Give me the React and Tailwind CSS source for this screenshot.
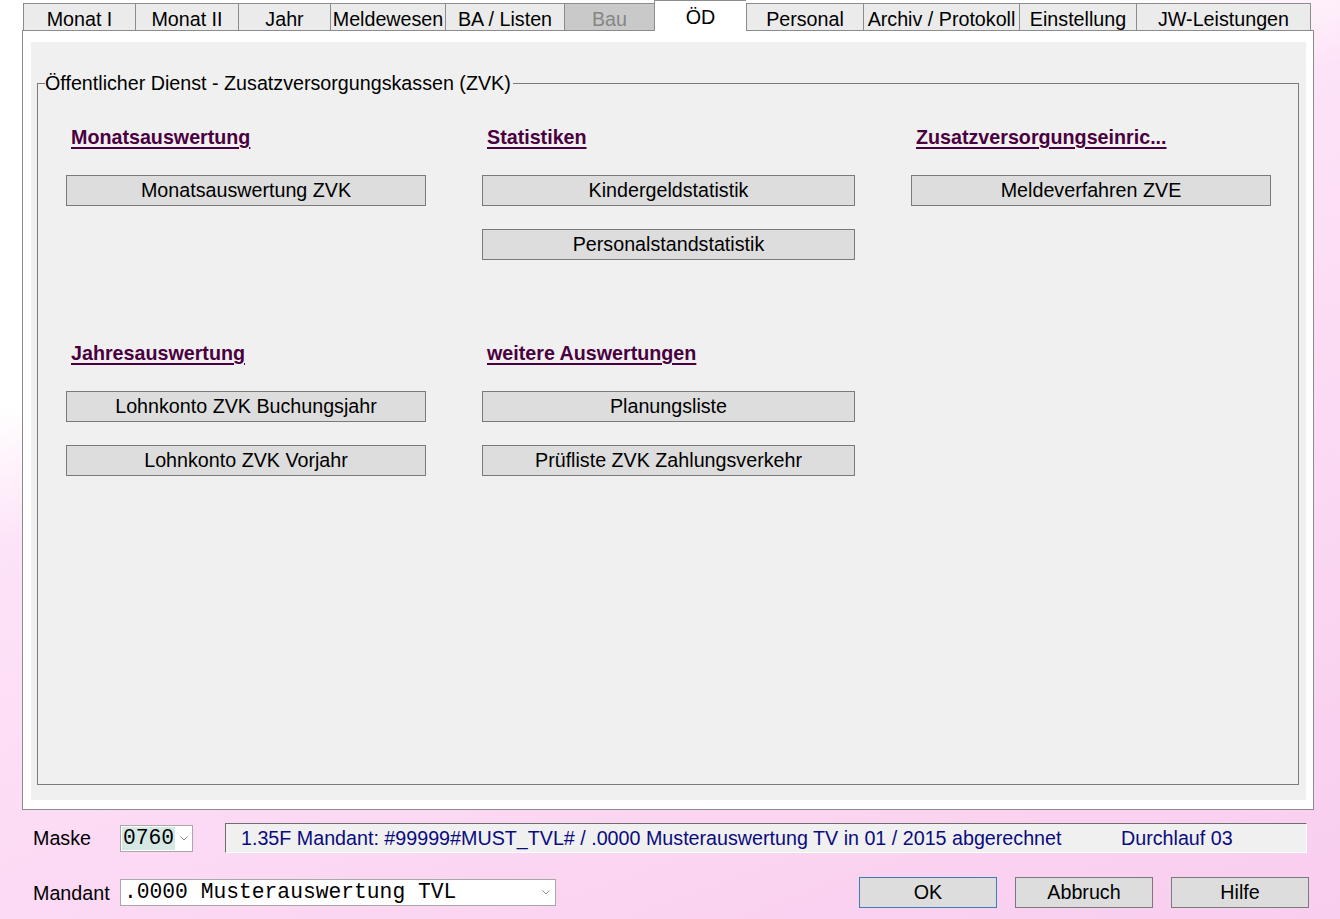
import React from "react";

const tabs = [
  { label: "Monat I", w: "w-[112px]" },
  { label: "Monat II", w: "w-[103px]" },
  { label: "Jahr", w: "w-[92px]" },
  { label: "Meldewesen", w: "w-[115px]" },
  { label: "BA / Listen", w: "w-[119px]" },
  { label: "Bau", w: "w-[90px]", disabled: true },
  { label: "ÖD", w: "w-[92px]", active: true },
  { label: "Personal", w: "w-[117px]" },
  { label: "Archiv / Protokoll", w: "w-[156px]" },
  { label: "Einstellung", w: "w-[117px]" },
  { label: "JW-Leistungen", w: "w-[175px]", last: true },
];

function Tab({ label, w, disabled, active, last }) {
  if (active) {
    return (
      <div
        className={`${w} h-[31px] -mb-px shrink-0 border-l border-t border-[#8c8c8c] bg-white pt-[5px] text-center leading-[22px] whitespace-nowrap`}
      >
        {label}
      </div>
    );
  }
  return (
    <div
      className={`${w} h-[27px] shrink-0 border-l border-t ${
        last ? "border-r" : ""
      } border-[#8c8c8c] pt-[4px] text-center leading-[22px] whitespace-nowrap ${
        disabled ? "bg-[#c9c9c9] text-[#858585]" : "bg-[#ebebeb]"
      }`}
    >
      {label}
    </div>
  );
}

function ActionButton({ children }) {
  return (
    <button className="h-[31px] w-full border border-[#7a7a7a] bg-[#dddddd] text-center leading-[29px] text-black whitespace-nowrap">
      {children}
    </button>
  );
}

function Section({ title, items }) {
  return (
    <div className="flex flex-col">
      <div className="h-[24px] pl-[5px] font-bold leading-[24px] text-[#4a0040] underline decoration-[2px] underline-offset-[3px] whitespace-nowrap">
        {title}
      </div>
      <div className="mt-[26px] flex flex-col gap-[23px]">
        {items.map((t) => (
          <ActionButton key={t}>{t}</ActionButton>
        ))}
      </div>
    </div>
  );
}

function Chevron({ className }) {
  return (
    <svg className={className} width="8" height="5" viewBox="0 0 8 5" fill="none">
      <path d="M0.5 0.5 L4 4 L7.5 0.5" stroke="#8a8a8a" strokeWidth="1" />
    </svg>
  );
}

export default function App() {
  return (
    <div className="h-[919px] w-[1340px] overflow-hidden bg-[linear-gradient(160deg,#ffffff_0%,#ffffff_29%,#fde3f7_39%,#fcdbf5_60%,#f9cdee_100%)] font-['Liberation_Sans',Arial,sans-serif] text-[19.7px] leading-none text-black">
      <div className="ml-[22px] w-[1292px]">
        {/* tab strip */}
        <div className="relative z-10 flex h-[30px] items-end pl-px">
          {tabs.map((t) => (
            <Tab key={t.label} {...t} />
          ))}
        </div>

        {/* tab page */}
        <div className="h-[780px] border border-[#8c8c8c] bg-white pb-[9px] pl-[8px] pr-[7px] pt-[11px]">
          <div className="h-full bg-[#f0f0f0] pb-[15px] pl-[6px] pr-[7px] pt-[41px]">
            <div className="relative h-full border border-[#7a7a7a] pl-[28px] pt-[41px]">
              <div className="absolute left-[7px] top-[-12px] bg-[#f0f0f0] pr-[2px] leading-[22px] whitespace-nowrap">
                Öffentlicher Dienst - Zusatzversorgungskassen (ZVK)
              </div>

              <div className="grid grid-cols-[360px_373px_360px] grid-rows-[216px_auto] gap-x-[56px]">
                <Section title="Monatsauswertung" items={["Monatsauswertung ZVK"]} />
                <Section
                  title="Statistiken"
                  items={["Kindergeldstatistik", "Personalstandstatistik"]}
                />
                <Section
                  title="Zusatzversorgungseinric..."
                  items={["Meldeverfahren ZVE"]}
                />
                <Section
                  title="Jahresauswertung"
                  items={["Lohnkonto ZVK Buchungsjahr", "Lohnkonto ZVK Vorjahr"]}
                />
                <Section
                  title="weitere Auswertungen"
                  items={["Planungsliste", "Prüfliste ZVK Zahlungsverkehr"]}
                />
                <div />
              </div>
            </div>
          </div>
        </div>
      </div>

      {/* footer: mask selector and status */}
      <div className="pl-[33px]">
        <div className="mt-[13px] flex h-[30px] items-center">
          <div className="w-[87px] leading-[22px]">Maske</div>
          <div className="flex h-[27px] w-[73px] items-center border border-[#a8a8a8] bg-white pl-px">
            <span className="bg-[#d5e8e4] px-px font-['Liberation_Mono','Courier_New',monospace] text-[21.3px] leading-[23px]">
              0760
            </span>
            <Chevron className="ml-[5px]" />
          </div>
          <div className="ml-[32px] flex h-[30px] w-[1082px] items-center border border-b-white border-l-[#6e6e6e] border-r-white border-t-[#6e6e6e] bg-[#f0f0f0] pl-[15px] leading-[22px] text-[#0b0b80] whitespace-nowrap">
            <span className="w-[880px]">
              1.35F Mandant: #99999#MUST_TVL# / .0000 Musterauswertung TV in 01 / 2015 abgerechnet
            </span>
            <span>Durchlauf 03</span>
          </div>
        </div>

        <div className="mt-[24px] flex h-[31px] items-center">
          <div className="w-[87px] leading-[22px]">Mandant</div>
          <div className="flex h-[27px] w-[436px] items-center border border-[#a8a8a8] bg-white pl-[3px] pr-[5px]">
            <span className="flex-1 font-['Liberation_Mono','Courier_New',monospace] text-[21.3px] leading-[23px] whitespace-pre">
              .0000 Musterauswertung TVL
            </span>
            <Chevron />
          </div>
          <div className="ml-[303px] flex gap-[18px]">
            <button className="h-[31px] w-[138px] border border-[#3c7db8] bg-[#dddddd] leading-[29px]">
              OK
            </button>
            <button className="h-[31px] w-[138px] border border-[#7a7a7a] bg-[#dddddd] leading-[29px]">
              Abbruch
            </button>
            <button className="h-[31px] w-[138px] border border-[#7a7a7a] bg-[#dddddd] leading-[29px]">
              Hilfe
            </button>
          </div>
        </div>
      </div>
    </div>
  );
}
